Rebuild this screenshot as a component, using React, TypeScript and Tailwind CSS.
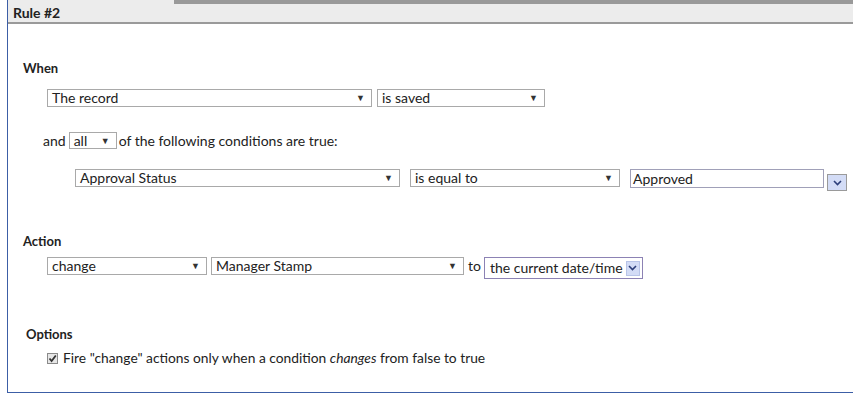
import React from "react";

const selFont = { fontFamily: "Lato, 'Open Sans', sans-serif" };

function Sel({ w, label, h = "h-[18px]" }: { w: string; label: string; h?: string }) {
  return (
    <div className={`${w} ${h} flex items-center border border-[#a9a9a9] bg-white pl-[4px] pr-[6px] text-[14px] leading-[16px] text-[#222]`}>
      <span className="flex-1 whitespace-nowrap">{label}</span>
      <span className="text-[9px] leading-[10px] text-[#333]">▼</span>
    </div>
  );
}

function Chevron() {
  return (
    <svg width="9" height="6" viewBox="0 0 9 6">
      <path d="M1 1 L4.5 4.5 L8 1" stroke="#2c3e7a" strokeWidth="1.6" fill="none" />
    </svg>
  );
}

export default function App() {
  return (
    <div className="w-[853px] h-[400px] bg-white pl-[7px]" style={{ fontFamily: "Lato, 'Liberation Sans', sans-serif" }}>
      <div className="border-l border-b border-[#3c5ea6] h-[393px]">
        {/* header */}
        <div className="bg-[#ececec] border-b-2 border-[#9a9a9a] h-[24px]">
          <div className="flex h-[4px]">
            <div className="w-[166px]" />
            <div className="flex-1 bg-[#999999]" />
          </div>
          <div className="pl-[5px] text-[14px] font-bold leading-[17px] text-[#222]">Rule #2</div>
        </div>

        {/* When */}
        <div className="pl-[15px] pt-[36px] text-[13px] font-bold leading-[16px] text-[#222]">When</div>
        <div className="flex gap-[5px] pl-[39px] mt-[13px]" style={selFont}>
          <Sel w="w-[325px]" label="The record" />
          <Sel w="w-[168px]" label="is saved" />
        </div>

        <div className="flex items-center pl-[35px] mt-[25px] text-[14px] leading-[16px] text-[#222]" style={selFont}>
          <span className="mr-[3px]">and</span>
          <Sel w="w-[48px]" h="h-[17px]" label="all" />
          <span className="ml-[2px]">of the following conditions are true:</span>
        </div>

        <div className="flex items-start pl-[67px] mt-[20px]" style={selFont}>
          <Sel w="w-[325px]" label="Approval Status" />
          <div className="w-[10px]" />
          <Sel w="w-[210px]" label="is equal to" />
          <div className="w-[10px]" />
          <div className="w-[194px] h-[19px] border border-[#a0a0b8] bg-white pl-[2px] text-[14px] leading-[17px] text-[#222]">Approved</div>
          <div className="ml-[3px] mt-[5px] w-[20px] h-[17px] border border-[#9a9a9a] bg-[#d3dcf6] flex items-center justify-center">
            <Chevron />
          </div>
        </div>

        {/* Action */}
        <div className="pl-[15px] mt-[42px] text-[13px] font-bold leading-[16px] text-[#222]">Action</div>
        <div className="flex items-start pl-[39px] mt-[8px] text-[14px] leading-[16px] text-[#222]" style={selFont}>
          <Sel w="w-[160px]" label="change" />
          <div className="w-[4px]" />
          <Sel w="w-[253px]" label="Manager Stamp" />
          <span className="ml-[4px] mr-[3px] leading-[18px]">to</span>
          <div className="w-[159px] h-[22px] border border-[#8c82b4] bg-white flex items-center pl-[5px] pr-[2px]">
            <span className="flex-1 whitespace-nowrap">the current date/time</span>
            <div className="w-[14px] h-[15px] bg-[#d3dcf6] border border-[#b8c4e8] flex items-center justify-center">
              <Chevron />
            </div>
          </div>
        </div>

        {/* Options */}
        <div className="pl-[18px] mt-[47px] text-[13px] font-bold leading-[16px] text-[#222]">Options</div>
        <div className="flex items-center pl-[39px] mt-[8px] text-[14px] leading-[16px] text-[#222]" style={selFont}>
          <div className="w-[11px] h-[11px] border border-[#8a8a8a] bg-[#e6e6e6] flex items-center justify-center mr-[5px]">
            <svg width="9" height="9" viewBox="0 0 9 9">
              <path d="M1.5 4.5 L3.6 7 L7.8 1.5" stroke="#333" strokeWidth="1.8" fill="none" />
            </svg>
          </div>
          <span className="text-[13.8px]">
            Fire "change" actions only when a condition <i>changes</i> from false to true
          </span>
        </div>
      </div>
    </div>
  );
}
